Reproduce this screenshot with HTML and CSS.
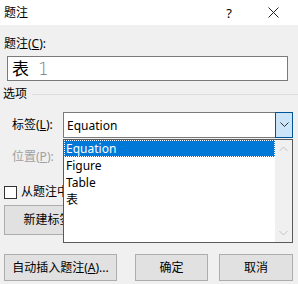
FILE: index.html
```html
<!DOCTYPE html>
<html lang="zh-CN">
<head>
	<meta charset="UTF-8">
	<title>题注</title>
	<link rel="stylesheet" href="styles.css">
</head>
<body>
	<div class="dialog">
		<div class="titlebar">
			<span class="title">题注</span>
			<span class="tb-btn help">?</span>
			<span class="tb-btn close">
				<svg width="11" height="11" viewBox="0 0 11 11"><path d="M0.5 0.5L10.5 10.5M10.5 0.5L0.5 10.5" stroke="#222" stroke-width="1" fill="none"/></svg>
			</span>
		</div>
		<div class="content">
			<div class="label caption-label">题注(<u>C</u>):</div>
			<div class="caption-input"><span class="cn">表</span><span class="num">1</span></div>
			<div class="group">
				<span class="group-title">选项</span>
				<span class="group-line"></span>
			</div>
			<div class="row row-label">
				<span class="row-name">标签(<u>L</u>):</span>
				<div class="combo-wrap">
					<div class="combo">
						<span class="combo-text">Equation</span>
						<span class="combo-btn">
							<svg width="9" height="6" viewBox="0 0 9 6"><path d="M0.5 0.5L4.5 4.5L8.5 0.5" stroke="#333" stroke-width="1" fill="none"/></svg>
						</span>
					</div>
					<div class="droplist">
						<ul class="items">
							<li class="selected">Equation</li>
							<li>Figure</li>
							<li>Table</li>
							<li>表</li>
						</ul>
						<div class="scrollbar">
							<svg width="9" height="6" viewBox="0 0 9 6"><path d="M0.5 5L4.5 1L8.5 5" stroke="#c2c2c2" stroke-width="1" fill="none"/></svg>
							<svg width="9" height="6" viewBox="0 0 9 6"><path d="M0.5 1L4.5 5L8.5 1" stroke="#c2c2c2" stroke-width="1" fill="none"/></svg>
						</div>
					</div>
				</div>
			</div>
			<div class="row row-pos">
				<span class="row-name disabled">位置(<u>P</u>):</span>
			</div>
			<div class="check-row">
				<span class="checkbox"></span>
				<span>从题注中排除标签(<u>E</u>)</span>
			</div>
			<div class="btn-row">
				<span class="btn new-label">新建标签(<u>N</u>)...</span>
			</div>
			<div class="footer">
				<span class="btn auto">自动插入题注(<u>A</u>)...</span>
				<span class="btn ok">确定</span>
				<span class="btn cancel">取消</span>
			</div>
		</div>
	</div>
</body>
</html>
```
FILE: styles.css
```css
* {margin: 0;padding: 0;box-sizing: border-box;}
ul {list-style: none;}
html, body {width: 298px;height: 284px;overflow: hidden;background: #f0f0f0;}
body {font-family: "Noto Sans", "Noto Sans CJK SC", sans-serif;font-size: 12px;line-height: 16px;color: #000;}
u {text-decoration: underline;text-underline-offset: 1px;}

.dialog {width: 298px;height: 284px;}
.titlebar {display: flex;align-items: center;height: 25px;background: #fff;padding-left: 4px;}
.title {flex: 1;}
.tb-btn {display: flex;justify-content: center;align-items: center;width: 24px;height: 25px;}
.help {margin-right: 20px;font-size: 13px;}
.close {margin-right: 13px;}

.content {padding-top: 11px;}
.label {padding-left: 4px;height: 16px;}
.caption-input {display: flex;align-items: center;margin: 4px 0 0 7px;width: 281px;height: 25px;background: #fff;border: 1px solid #7a7a7a;padding-left: 4px;}
.caption-input .cn {font-size: 17px;}
.caption-input .num {font-size: 17px;color: #777;margin-left: 9px;font-family: "DejaVu Sans", sans-serif;font-weight: 300;}

.group {display: flex;align-items: center;margin-top: 5px;height: 16px;padding-left: 3px;}
.group-line {flex: 1;height: 1px;background: #dcdcdc;margin-left: 5px;}

.row {display: flex;align-items: center;padding-left: 12px;}
.row-label {margin-top: 10px;height: 26px;}
.row-pos {margin-top: 6px;height: 26px;}
.row-name {width: 51px;}
.disabled {color: #a0a0a0;}

.combo-wrap {position: relative;}
.combo {display: flex;align-items: center;width: 230px;height: 26px;background: #fff;border: 1px solid #7a7a7a;}
.combo-text {flex: 1;padding-left: 3px;padding-top: 1px;}
.combo-btn {display: flex;justify-content: center;align-items: center;width: 18px;height: 26px;margin: -1px -1px -1px 0;background: #cce4f7;border: 1px solid #005499;}

.droplist {position: absolute;left: 0;top: 27px;width: 230px;height: 104px;display: flex;background: #fff;border: 1px solid #5a5a5a;z-index: 2;}
.items {flex: 1;}
.items li {height: 17px;line-height: 17px;padding-left: 2px;}
.items li.selected {background: #0078d7;color: #fff;outline: 1px dotted #fff;outline-offset: -1px;border: 1px dotted #003c6c;line-height: 15px;padding-left: 1px;}
.scrollbar {display: flex;flex-direction: column;justify-content: space-between;align-items: center;width: 17px;background: #f0f0f0;padding: 6px 0;}

.check-row {display: flex;align-items: center;margin-top: 14px;height: 16px;padding-left: 4px;gap: 4px;}
.checkbox {width: 13px;height: 13px;background: #fff;border: 1px solid #333;}

.btn {display: flex;justify-content: center;align-items: center;background: #e1e1e1;border: 1px solid #adadad;}
.btn-row {margin-top: 5px;padding-left: 4px;}
.new-label {width: 113px;height: 30px;}

.footer {display: flex;margin-top: 19px;padding-left: 4px;}
.auto {width: 113px;height: 27px;}
.ok {width: 73px;height: 27px;margin-left: 18px;}
.cancel {width: 74px;height: 27px;margin-left: 11px;}
```
